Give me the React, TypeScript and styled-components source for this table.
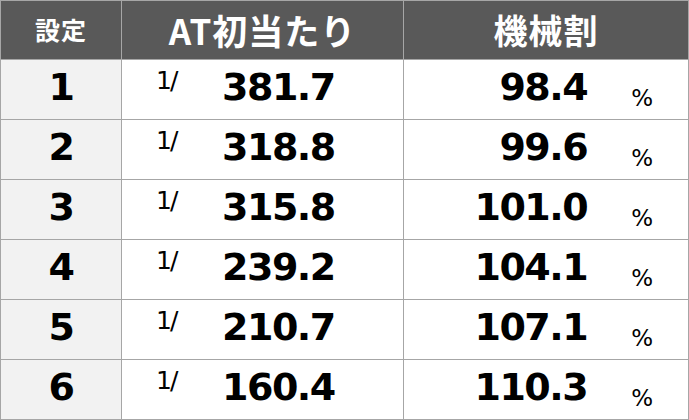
import React from 'react';
import styled, { createGlobalStyle } from 'styled-components';

const GlobalStyle = createGlobalStyle`
    html, body {
        margin: 0;
        padding: 0;
        background: #ffffff;
    }
`;

const Table = styled.div`
    display: grid;
    grid-template-columns: 120px 281px 284px;
    grid-template-rows: 58px repeat(6, 59px);
    gap: 1px;
    padding: 1px;
    width: 689px;
    height: 420px;
    box-sizing: border-box;
    background-color: #a6a6a6;
`;

const HeadCell = styled.div<{ $size: number }>`
    display: flex;
    align-items: center;
    justify-content: center;
    background-color: #595959;
    color: #ffffff;
    font-family: "Noto Sans CJK JP", "Noto Sans", sans-serif;
    font-weight: 700;
    font-size: ${(p) => p.$size}px;
    letter-spacing: 1px;
    padding-bottom: 2px;
`;

const SettingCell = styled.div`
    display: flex;
    align-items: center;
    justify-content: center;
    background-color: #f2f2f2;
`;

const ProbCell = styled.div`
    display: flex;
    align-items: center;
    padding-left: 34px;
    background-color: #ffffff;
`;

const RateCell = styled.div`
    display: flex;
    align-items: center;
    justify-content: flex-end;
    padding-right: 35px;
    background-color: #ffffff;
`;

const BigNum = styled.span`
    font-family: "DejaVu Sans", Verdana, sans-serif;
    font-weight: 700;
    font-size: 38px;
    letter-spacing: -1.5px;
    line-height: 1;
    color: #000000;
    margin-bottom: 5px;
`;

const Frac = styled.span`
    align-self: flex-start;
    margin-top: 6px;
    width: 66px;
    font-family: "DejaVu Sans", Verdana, sans-serif;
    font-size: 25px;
    letter-spacing: -2px;
    color: #000000;
`;

const Percent = styled.span`
    margin-left: 44px;
    margin-top: 17px;
    font-family: "DejaVu Sans", Verdana, sans-serif;
    font-size: 23px;
    color: #000000;
`;

const rows = [
    { setting: '1', prob: '381.7', rate: '98.4' },
    { setting: '2', prob: '318.8', rate: '99.6' },
    { setting: '3', prob: '315.8', rate: '101.0' },
    { setting: '4', prob: '239.2', rate: '104.1' },
    { setting: '5', prob: '210.7', rate: '107.1' },
    { setting: '6', prob: '160.4', rate: '110.3' },
];

const App: React.FC = () => {
    return (
        <>
            <GlobalStyle />
            <Table>
                <HeadCell $size={25}>設定</HeadCell>
                <HeadCell $size={35}>AT初当たり</HeadCell>
                <HeadCell $size={34}>機械割</HeadCell>
                {rows.map((r) => (
                    <React.Fragment key={r.setting}>
                        <SettingCell>
                            <BigNum>{r.setting}</BigNum>
                        </SettingCell>
                        <ProbCell>
                            <Frac>1/</Frac>
                            <BigNum>{r.prob}</BigNum>
                        </ProbCell>
                        <RateCell>
                            <BigNum>{r.rate}</BigNum>
                            <Percent>%</Percent>
                        </RateCell>
                    </React.Fragment>
                ))}
            </Table>
        </>
    );
};

export default App;
